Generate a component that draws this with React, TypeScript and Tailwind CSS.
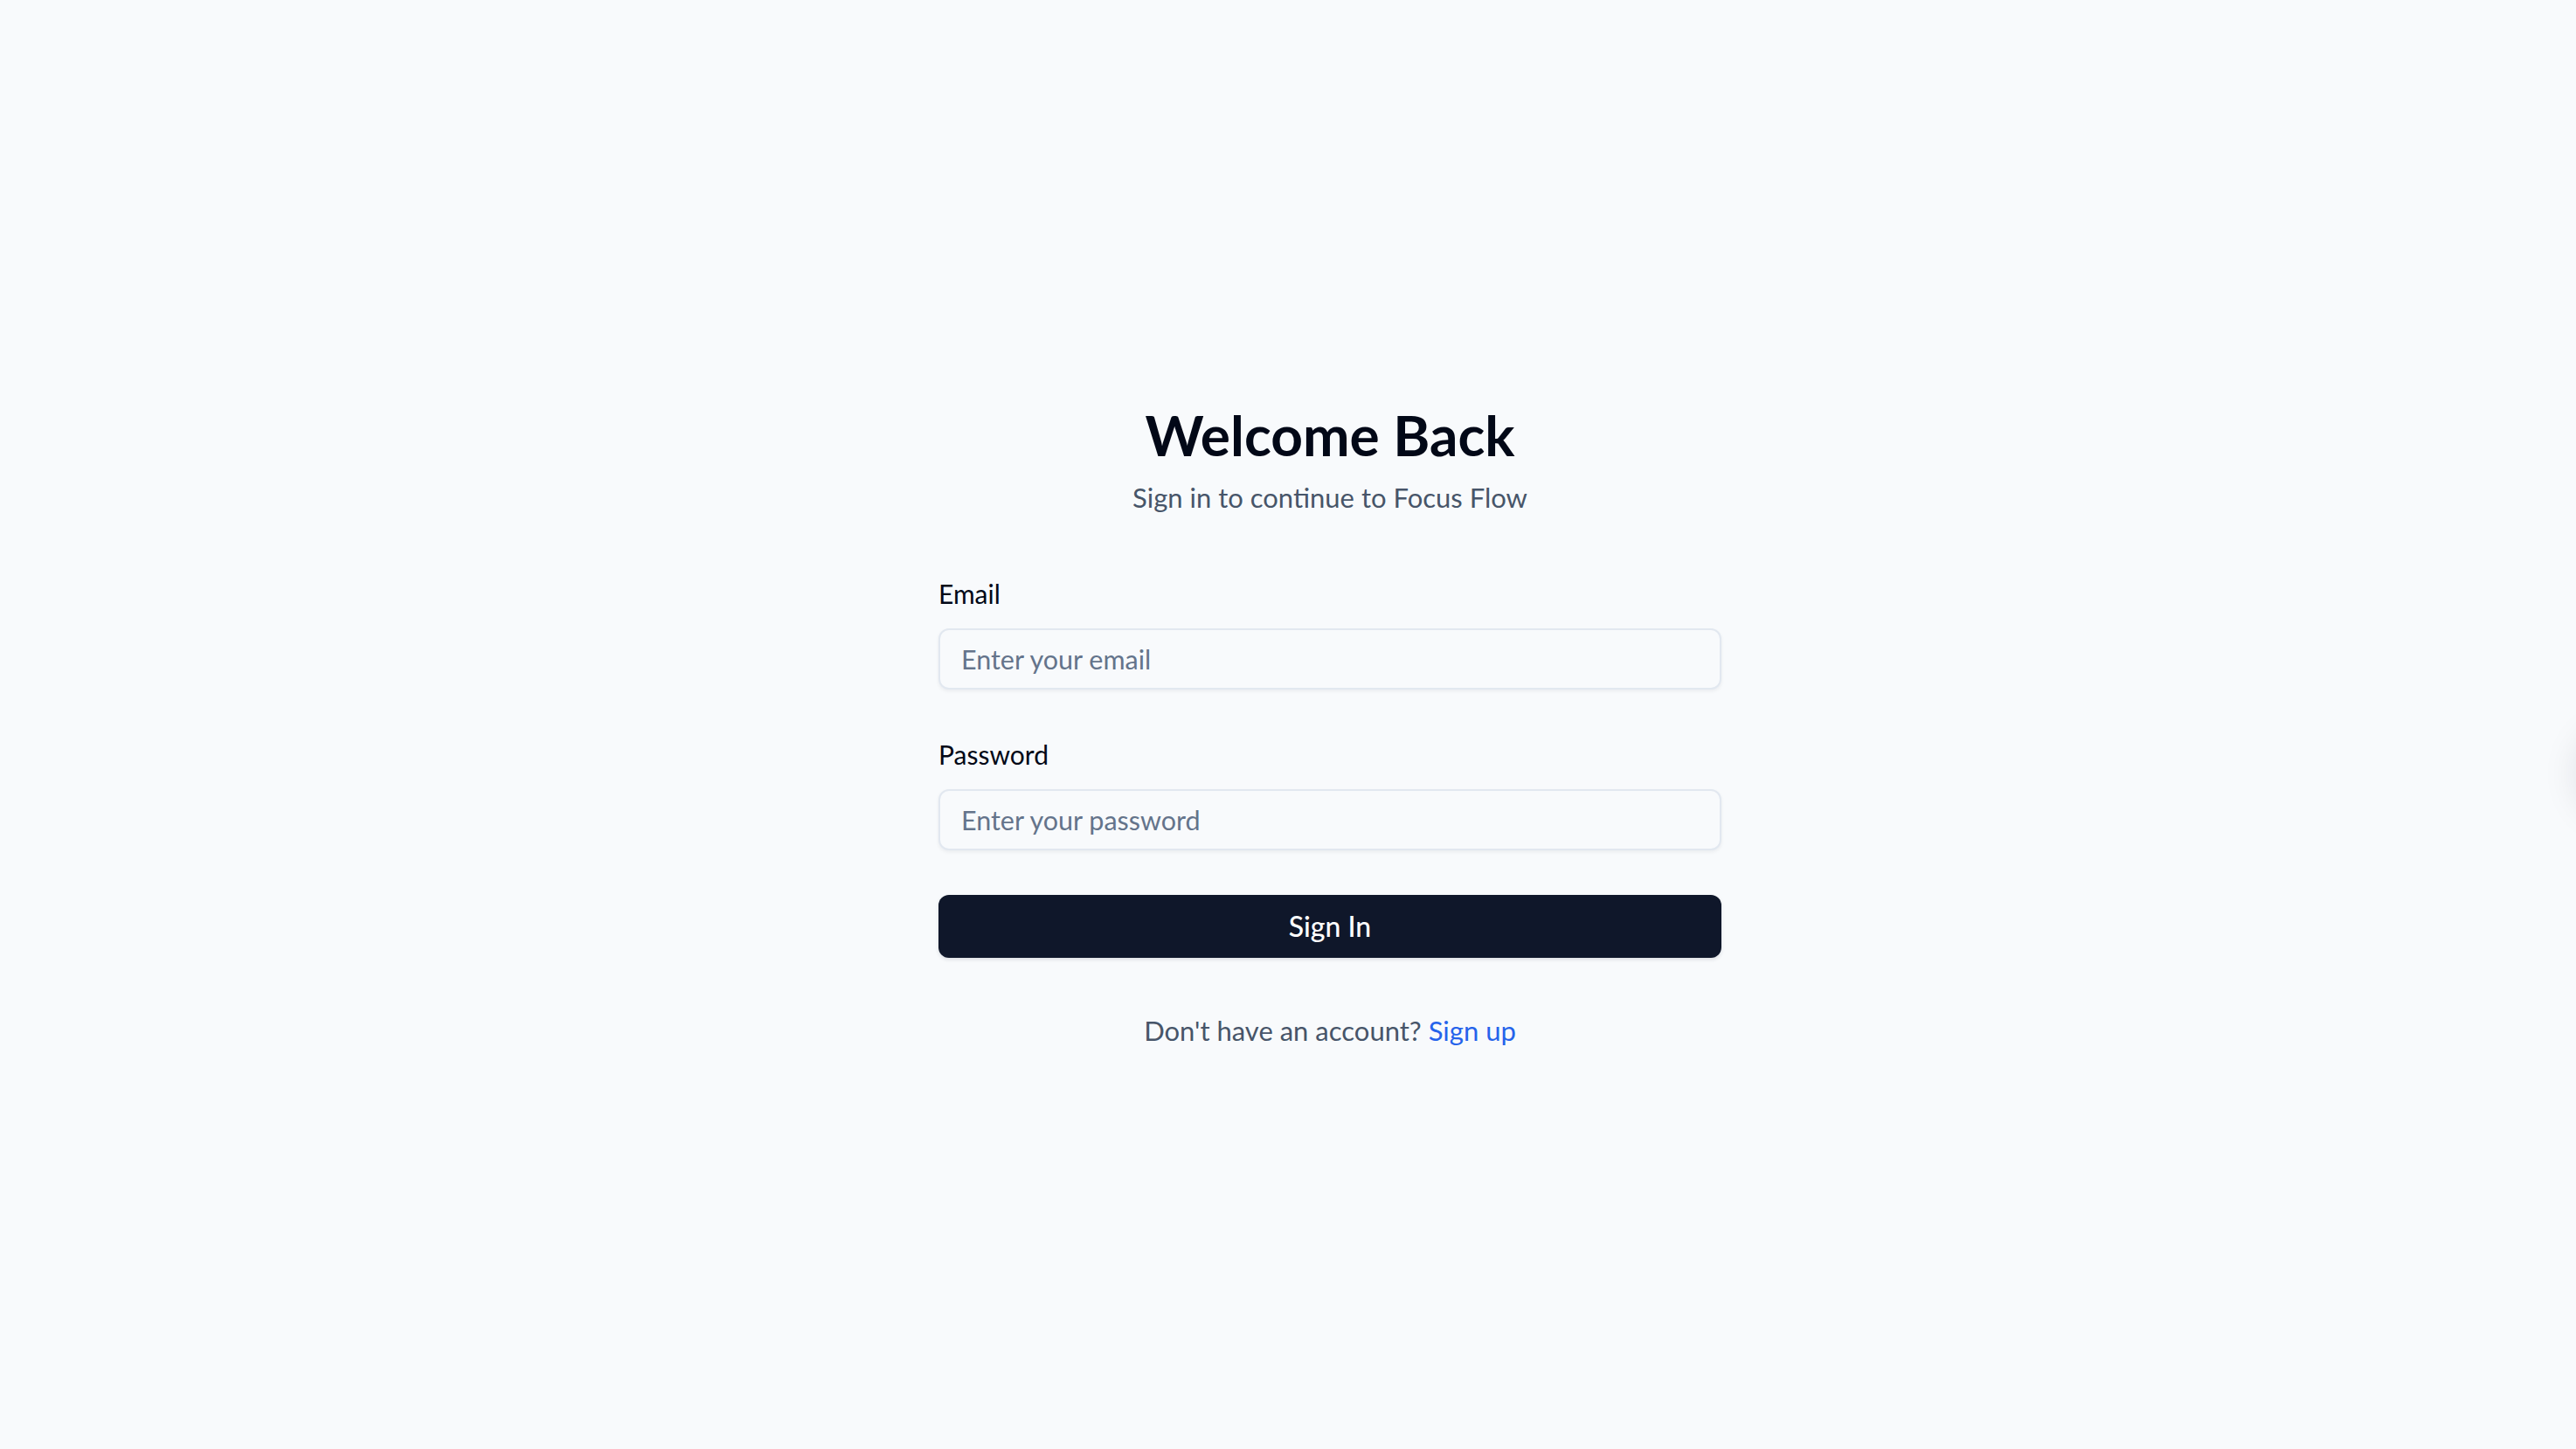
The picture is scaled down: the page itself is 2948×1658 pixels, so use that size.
import { useState } from 'react';

const FONT = "font-['Lato','Noto_Sans',sans-serif]";

const Field = ({
  label,
  type,
  placeholder,
  value,
  onChange,
}: {
  label: string;
  type: string;
  placeholder: string;
  value: string;
  onChange: (v: string) => void;
}) => (
  <div className="flex flex-col">
    <label className="text-[30px] leading-[48px] text-[#020817]">{label}</label>
    <input
      type={type}
      placeholder={placeholder}
      value={value}
      onChange={(e) => onChange(e.target.value)}
      className="mt-[16px] h-[70px] w-full rounded-[12px] border-2 border-[#e2e8f0] bg-[#f8fafc] px-[24px] text-[30.5px] text-[#020817] placeholder:text-[#64748b] shadow-[0_2px_4px_rgba(15,23,42,0.06)] outline-none"
    />
  </div>
);

const App = () => {
  const [email, setEmail] = useState('');
  const [password, setPassword] = useState('');

  return (
    <div className={`relative min-h-screen overflow-hidden bg-[#f8fafc] ${FONT}`}>
      <div className="flex min-h-screen items-center justify-center pl-[96px] pt-[5px]">
        <div className="w-[896px]">
          {/* Header */}
          <div className="text-center">
            <h1 className="text-[64px] font-bold leading-[76px] text-[#020817]">Welcome Back</h1>
            <p className="mt-[9px] text-[31px] leading-[48px] text-[#475569]">
              Sign in to continue to Focus Flow
            </p>
          </div>

          <form className="mt-[62px] flex flex-col gap-[50px]" onSubmit={(e) => e.preventDefault()}>
            <Field label="Email" type="email" placeholder="Enter your email" value={email} onChange={setEmail} />
            <Field
              label="Password"
              type="password"
              placeholder="Enter your password"
              value={password}
              onChange={setPassword}
            />
            <button
              type="submit"
              className="mt-[1px] h-[72px] w-full rounded-[12px] bg-[#0f172a] text-[32px] font-medium text-white shadow-[0_2px_4px_rgba(15,23,42,0.12)]"
            >
              Sign In
            </button>
          </form>

          <p className="mt-[59px] text-center text-[31px] leading-[48px] text-[#475569]">
            Don't have an account? <a href="#" className="text-[#2563eb]">Sign up</a>
          </p>
        </div>
      </div>

      {/* off-screen floating element, only its shadow shows */}
      <div className="absolute right-[-110px] top-[830px] h-[110px] w-[110px] rounded-full bg-[#f8fafc] shadow-[0_0_40px_rgba(15,23,42,0.10)]" />
    </div>
  );
};

export default App;
